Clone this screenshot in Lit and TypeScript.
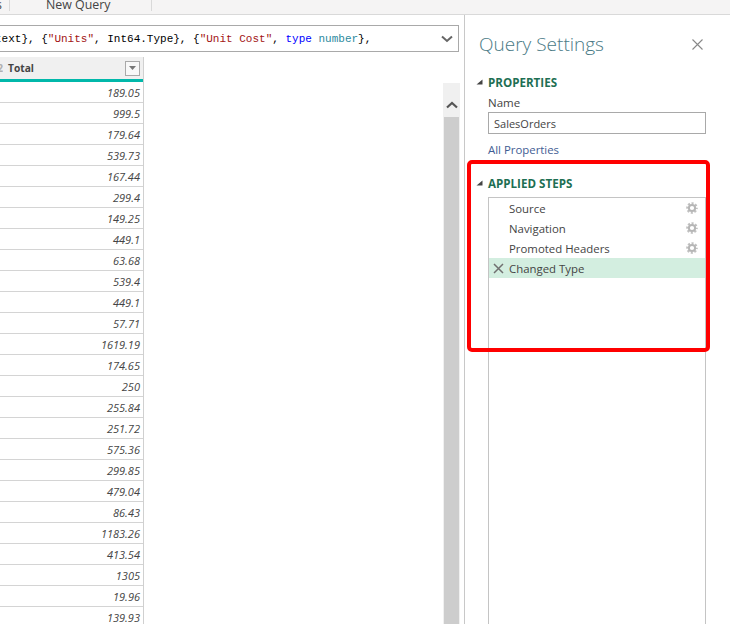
import { LitElement, html, css, svg } from "lit";
import { customElement } from "lit/decorators.js";

const totals = ["189.05","999.5","179.64","539.73","167.44","299.4","149.25","449.1","63.68","539.4","449.1","57.71","1619.19","174.65","250","255.84","251.72","575.36","299.85","479.04","86.43","1183.26","413.54","1305","19.96","139.93"];
const steps = ["Source","Navigation","Promoted Headers"];

const gear = svg`<svg class="gear" width="12" height="12" viewBox="0 0 12 12"><circle cx="6" cy="6" r="4.7" fill="none" stroke="#c0c0c0" stroke-width="2.2" stroke-dasharray="2.1 1.59" stroke-dashoffset="1.05"/><circle cx="6" cy="6" r="3.1" fill="none" stroke="#b6b6b6" stroke-width="2"/></svg>`;
const tri = svg`<svg class="tri" width="7" height="6" viewBox="0 0 7 6"><path d="M6.5 0.5V5.5H0.5Z" fill="#444"/></svg>`;

@customElement("app-root")
export class AppRoot extends LitElement {
  static styles = css`
    :host { display: block; width: 730px; height: 624px; overflow: hidden; background: #fff; position: relative; font-family: "Open Sans", sans-serif; color: #444; }
    .top { height: 14px; background: #f5f4f4; border-bottom: 1px solid #d9d9d9; display: flex; overflow: hidden; }
    .tab0 { width: 13px; flex: none; border-right: 1px solid #d9d9d9; height: 11px; font-size: 12.4px; line-height: 10px; margin-left: -4px; white-space: nowrap; }
    .tab { width: 105px; flex: none; border-right: 1px solid #d9d9d9; height: 11px; padding-left: 36px; font-size: 12.4px; line-height: 10px; color: #444; white-space: nowrap; }
    .main { display: flex; height: 609px; }
    .left { width: 464px; flex: none; border-right: 1px solid #c8c8c8; padding-top: 10px; display: flex; flex-direction: column; overflow: hidden; }
    .formula { width: 459px; height: 27px; box-sizing: border-box; border: 1px solid #a9a9a9; border-left: none; display: flex; align-items: center; overflow: hidden; font-family: "Liberation Mono", monospace; font-size: 11px; white-space: pre; color: #000; }
    .code { margin-left: -5px; flex: 1; overflow: hidden; }
    .str { color: #a31515; } .kw { color: #0000ff; } .ty { color: #2b8a9e; }
    .chev { flex: none; margin-right: 5px; }
    .body { display: flex; justify-content: space-between; width: 460px; margin-top: 5px; flex: 1; min-height: 0; }
    .table { width: 144px; border-right: 1px solid #d0d0d0; box-sizing: border-box; overflow: hidden; }
    .head { height: 22px; background: #f0f0f0; display: flex; align-items: center; font-weight: 700; font-size: 10.2px; color: #444; }
    .head .type { flex: none; width: 3px; margin-right: 5px; color: #b0b0b0; overflow: hidden; direction: rtl; }
    .head .name { flex: 1; }
    .fbtn { width: 15px; height: 15px; box-sizing: border-box; border: 1px solid #a9a9a9; background: #f8f8f8; display: flex; align-items: center; justify-content: center; margin-right: 3px; }
    .teal { height: 3px; background: #01b8aa; }
    .row { height: 21px; box-sizing: border-box; border-bottom: 1px solid #d4d4d4; text-align: right; padding-right: 3px; font-style: italic; font-size: 11px; line-height: 22px; color: #444; }
    .sb { width: 17px; margin-top: 26px; background: #f0f0f0; display: flex; flex-direction: column; align-items: center; }
    .up { height: 34px; flex: none; display: flex; align-items: center; justify-content: center; padding-top: 10px; box-sizing: border-box; }
    .thumb { width: 15px; flex: 1; background: #cdcdcd; }
    .pane { flex: 1; padding: 0 24px 0 23px; display: flex; flex-direction: column; min-width: 0; }
    .title { display: flex; align-items: center; justify-content: space-between; height: 30px; margin-top: 14px; margin-left: -9px; margin-right: 2px; font-size: 19px; font-weight: 300; color: #4a7a86; }
    .sect { display: flex; align-items: center; gap: 5px; margin-left: -12px; font-size: 11.6px; font-weight: 700; color: #1e6f53; height: 16px; }
    .props { margin-top: 15px; }
    .label { font-size: 11.5px; line-height: 16px; margin-top: 5px; color: #444; }
    .input { height: 22px; box-sizing: border-box; border: 1px solid #a9a9a9; padding-left: 5px; font-size: 11px; line-height: 22px; margin-top: 1px; color: #444; }
    .link { font-size: 11.4px; color: #3f5d93; line-height: 16px; margin-top: 8px; }
    .applied { margin-top: 17px; }
    .list { flex: 1; margin-top: 6px; border: 1px solid #c4c4c4; border-bottom: none; }
    .step { height: 20px; display: flex; align-items: center; padding-left: 20px; padding-right: 7px; font-size: 11.4px; color: #444; }
    .step span { flex: 1; }
    .sel { background: #d3eee0; gap: 5px; padding-left: 4px; }
    .red { position: absolute; left: 467px; top: 160px; width: 243px; height: 192px; box-sizing: border-box; border: 4px solid #ff0000; border-radius: 5px; pointer-events: none; }
  `;

  render() {
    return html`
      <div class="top"><div class="tab0">s</div><div class="tab">New Query</div></div>
      <div class="main">
        <div class="left">
          <div class="formula">
            <div class="code">text}, {<span class="str">"Units"</span>, Int64.Type}, {<span class="str">"Unit Cost"</span>, <span class="kw">type</span> <span class="ty">number</span>},</div>
            <svg class="chev" width="12" height="8" viewBox="0 0 12 8"><path d="M1 1.5L6 6L11 1.5" fill="none" stroke="#666" stroke-width="2"/></svg>
          </div>
          <div class="body">
            <div class="table">
              <div class="head"><span class="type">2</span><span class="name">Total</span><div class="fbtn"><svg width="7" height="4" viewBox="0 0 7 4"><path d="M0 0H7L3.5 4Z" fill="#777"/></svg></div></div>
              <div class="teal"></div>
              ${totals.map((t) => html`<div class="row">${t}</div>`)}
            </div>
            <div class="sb">
              <div class="up"><svg width="12" height="8" viewBox="0 0 12 8"><path d="M1 6.5L6 2L11 6.5" fill="none" stroke="#555" stroke-width="2.2"/></svg></div>
              <div class="thumb"></div>
            </div>
          </div>
        </div>
        <div class="pane">
          <div class="title"><span>Query Settings</span>
            <svg width="13" height="13" viewBox="0 0 13 13"><path d="M1.5 1.5L11.5 11.5M11.5 1.5L1.5 11.5" stroke="#888" stroke-width="1.1" fill="none"/></svg>
          </div>
          <div class="sect props">${tri}<span>PROPERTIES</span></div>
          <div class="label">Name</div>
          <div class="input">SalesOrders</div>
          <div class="link">All Properties</div>
          <div class="sect applied">${tri}<span>APPLIED STEPS</span></div>
          <div class="list">
            ${steps.map((s) => html`<div class="step"><span>${s}</span>${gear}</div>`)}
            <div class="step sel">
              <svg width="11" height="11" viewBox="0 0 11 11"><path d="M1 1L10 10M10 1L1 10" stroke="#707070" stroke-width="1.5" fill="none"/></svg>
              <span>Changed Type</span>
            </div>
          </div>
        </div>
      </div>
      <div class="red"></div>
    `;
  }
}
